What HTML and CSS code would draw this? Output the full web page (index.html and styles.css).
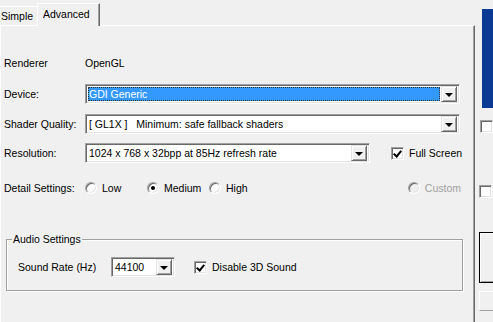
FILE: index.html
```html
<!DOCTYPE html>
<html>
  <head>
    <title>Advanced Settings</title>
    <link rel="stylesheet" href="styles.css">
  </head>
  <body>
    <div class="window">
      <div class="main">
        <div class="tabs">
          <div class="tab">Simple</div>
          <div class="tab active">Advanced</div>
        </div>
        <div class="panel">
          <div class="row renderer">
            <span class="label">Renderer</span>
            <span class="value">OpenGL</span>
          </div>
          <div class="row device">
            <span class="label">Device:</span>
            <div class="combo wide">
              <div class="combo-text selected"><span>GDI Generic</span></div>
              <div class="arrow"><i></i></div>
            </div>
          </div>
          <div class="row shader">
            <span class="label">Shader Quality:</span>
            <div class="combo wide">
              <div class="combo-text">[ GL1X ]&nbsp;&nbsp;&nbsp;Minimum: safe fallback shaders</div>
              <div class="arrow"><i></i></div>
            </div>
          </div>
          <div class="row resolution">
            <span class="label">Resolution:</span>
            <div class="combo res">
              <div class="combo-text">1024 x 768 x 32bpp at 85Hz refresh rate</div>
              <div class="arrow"><i></i></div>
            </div>
            <label class="check fullscreen"><span class="box checked"></span>Full Screen</label>
          </div>
          <div class="row detail">
            <span class="label">Detail Settings:</span>
            <label class="radio low"><span class="dot"></span>Low</label>
            <label class="radio medium"><span class="dot on"></span>Medium</label>
            <label class="radio high"><span class="dot"></span>High</label>
            <label class="radio custom disabled"><span class="dot"></span>Custom</label>
          </div>
          <fieldset class="group">
            <legend>Audio Settings</legend>
            <div class="row sound">
              <span class="sound-label">Sound Rate (Hz)</span>
              <div class="combo rate">
                <div class="combo-text">44100</div>
                <div class="arrow"><i></i></div>
              </div>
              <label class="check no3d"><span class="box checked"></span>Disable 3D Sound</label>
            </div>
          </fieldset>
        </div>
      </div>
      <div class="side">
        <div class="preview"></div>
        <span class="box side-check first"></span>
        <span class="box side-check second"></span>
        <div class="side-button default"></div>
        <div class="side-button"></div>
      </div>
    </div>
  </body>
</html>
```

FILE: styles.css
```css
html, body {
  margin: 0;
  height: 100%;
  overflow: hidden;
}

body {
  font-family: "Liberation Sans", Arial, sans-serif;
  font-size: 10.5px;
  color: #000;
  background-color: #f0f0f0;
}

.window {
  display: flex;
  height: 322px;
}

.main {
  width: 475px;
  flex: none;
}

/* tabs */
.tabs {
  display: flex;
  align-items: flex-end;
  height: 25px;
}

.tab {
  width: 36px;
  height: 18px;
  line-height: 19px;
  padding-left: 1px;
  border-top: 1px solid #fff;
}

.tab.active {
  width: 56px;
  height: 22px;
  line-height: 20px;
  padding: 0 0 0 5px;
  border-left: 1px solid #fff;
  border-top: 1px solid #fff;
  border-right: 1px solid #696969;
  box-shadow: inset -1px 0 #a0a0a0;
  margin-bottom: -1px;
  position: relative;
  background-color: #f0f0f0;
}

.panel {
  height: 284px;
  border-top: 1px solid #fff;
  border-left: 1px solid #fff;
  border-right: 1px solid #696969;
  border-bottom: 1px solid #696969;
  box-shadow: inset -1px -1px #a0a0a0;
  padding: 26px 0 0 3px;
  box-sizing: content-box;
}

.row {
  display: flex;
  align-items: center;
  height: 20px;
}

.label {
  width: 81px;
  flex: none;
}

.renderer { margin-top: 1px; }
.device { margin-top: 11px; }
.shader { margin-top: 10px; }
.resolution { margin-top: 9px; }
.detail { margin-top: 15px; }

/* combo boxes */
.combo {
  display: flex;
  align-items: center;
  height: 20px;
  box-sizing: border-box;
  border: 1px solid;
  border-color: #a0a0a0 #fff #fff #a0a0a0;
  box-shadow: inset 1px 1px #696969, inset -1px -1px #e3e3e3;
  background-color: #fff;
  padding: 2px;
}

.combo.wide { width: 375px; }
.combo.res { width: 285px; }
.combo.rate { width: 64px; }

.combo-text {
  flex: 1;
  height: 14px;
  line-height: 14px;
  padding-left: 1px;
  white-space: nowrap;
  overflow: hidden;
}

.combo-text.selected {
  background-color: #3399ff;
  color: #fff;
  outline: 1px dotted #333;
  outline-offset: -1px;
  margin-right: 1px;
}

.arrow {
  width: 16px;
  height: 16px;
  box-sizing: border-box;
  border: 1px solid;
  border-color: #e3e3e3 #696969 #696969 #e3e3e3;
  box-shadow: inset 1px 1px #fff, inset -1px -1px #a0a0a0;
  background-color: #f0f0f0;
  display: flex;
  align-items: center;
  justify-content: center;
}

.arrow i {
  width: 0;
  height: 0;
  border-left: 4px solid transparent;
  border-right: 4px solid transparent;
  border-top: 4px solid #000;
  margin-top: 1px;
}

/* checkboxes */
.check {
  display: flex;
  align-items: center;
  white-space: nowrap;
}

.box {
  display: inline-block;
  width: 13px;
  height: 13px;
  box-sizing: border-box;
  border: 1px solid;
  border-color: #a0a0a0 #fff #fff #a0a0a0;
  box-shadow: inset 1px 1px #696969, inset -1px -1px #e3e3e3;
  background-color: #fff;
  flex: none;
  position: relative;
}

.box.checked::after {
  content: "";
  position: absolute;
  left: 3px;
  top: 1px;
  width: 3px;
  height: 6px;
  border-right: 2px solid #000;
  border-bottom: 2px solid #000;
  transform: rotate(40deg);
}

.check .box {
  margin-right: 5px;
}

.fullscreen { margin-left: 21px; }

/* radios */
.radio {
  display: flex;
  align-items: center;
  white-space: nowrap;
}

.dot {
  width: 12px;
  height: 12px;
  box-sizing: border-box;
  border-radius: 50%;
  border: 1px solid;
  border-color: #a0a0a0 #fff #fff #a0a0a0;
  box-shadow: inset 1px 1px #696969, inset -1px -1px #e3e3e3;
  background-color: #fff;
  margin-right: 5px;
  display: flex;
  align-items: center;
  justify-content: center;
}

.dot.on::after {
  content: "";
  width: 4px;
  height: 4px;
  border-radius: 50%;
  background-color: #000;
}

.low,
.medium {
  width: 62px;
}

.custom {
  margin-left: auto;
  margin-right: 13px;
}

.radio.disabled {
  color: #a0a0a0;
}

.radio.disabled .dot {
  background-color: #f0f0f0;
}

/* audio group */
.group {
  margin: 35px 0 0 2px;
  width: 455px;
  height: 56px;
  padding: 0;
  border: 1px solid #a0a0a0;
  box-shadow: 1px 1px #fff, inset 1px 1px #fff;
}

.group legend {
  padding: 0 1px;
  margin-left: 5px;
}

.sound {
  margin-top: 12px;
  padding-left: 11px;
}

.sound-label {
  width: 93px;
  flex: none;
}

.no3d { margin-left: 19px; }

/* right edge of the neighbouring window */
.side {
  flex: 1;
  padding-left: 5px;
  display: flex;
  flex-direction: column;
  align-items: flex-start;
}

.preview {
  width: 20px;
  height: 99px;
  margin: 9px 0 0 2px;
  background: linear-gradient(100deg, #0a3a94 0%, #0a3a94 70%, #05205a 100%);
}

.side-check.first {
  margin-top: 12px;
}

.side-check.second {
  margin-top: 52px;
  margin-left: -1px;
}

.side-button {
  width: 30px;
  height: 20px;
  margin-left: -1px;
  box-sizing: border-box;
  border: 1px solid;
  border-color: #fff #a0a0a0 #a0a0a0 #fff;
}

.side-button.default {
  margin-top: 34px;
  height: 51px;
  border: 1px solid #000;
  box-shadow: inset 1px 1px #fff, inset -1px -1px #a0a0a0;
  margin-bottom: 8px;
}
```
